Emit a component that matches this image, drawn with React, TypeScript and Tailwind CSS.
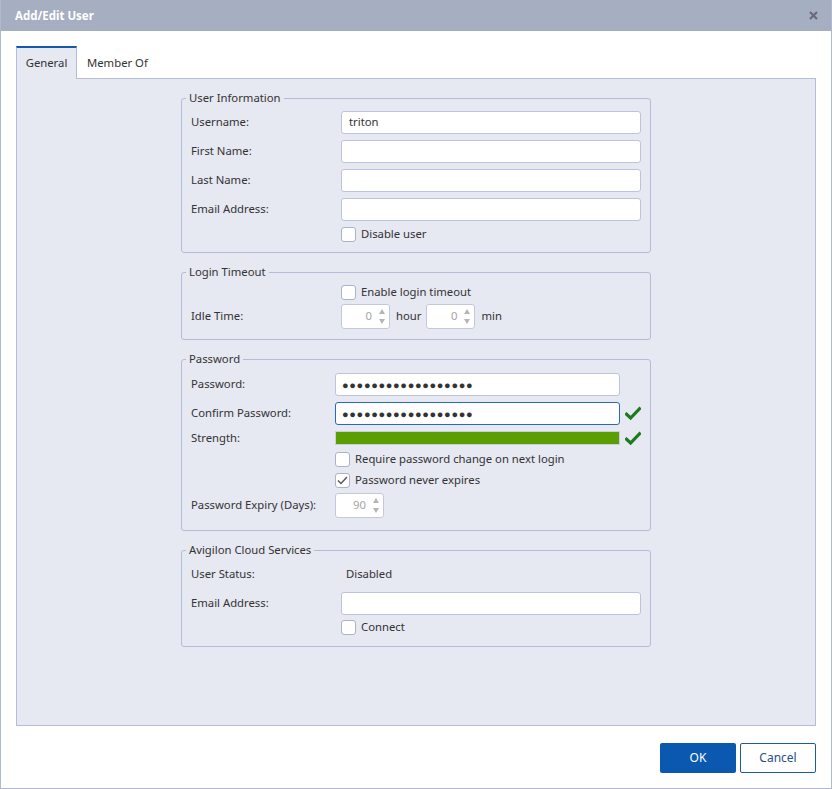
import React from 'react';

const FONT = { fontFamily: '"Noto Sans", "Open Sans", Arial, sans-serif' };

const GreenCheck = () => (
  <svg width="16" height="15" viewBox="0 0 16 15" className="shrink-0">
    <path d="M1.5 8.2 L5.6 12 L14.5 2.8" fill="none" stroke="#1e7a1e" strokeWidth="3.2" strokeLinecap="square" />
  </svg>
);

const CloseIcon = () => (
  <svg width="9" height="9" viewBox="0 0 9 9">
    <path d="M1 1 L8 8 M8 1 L1 8" stroke="#6a6a7c" strokeWidth="2.2" />
  </svg>
);

const Checkbox = ({ label, checked = false }: { label: string; checked?: boolean }) => (
  <label className="flex items-center gap-[5px] h-[15px]">
    <span className="w-[15px] h-[15px] shrink-0 bg-white border border-[#aab2cc] rounded-[3px] flex items-center justify-center">
      {checked && (
        <svg width="11" height="9" viewBox="0 0 11 9">
          <path d="M1 4.5 L4 7.5 L10 1" fill="none" stroke="#555" strokeWidth="1.4" />
        </svg>
      )}
    </span>
    <span>{label}</span>
  </label>
);

const TextBox = ({ value = '' }: { value?: string }) => (
  <div className="h-[23px] w-[300px] bg-white border border-[#bcc3dc] rounded-[3px] flex items-center px-[7px]">
    {value}
  </div>
);

const PasswordBox = ({ focused = false }: { focused?: boolean }) => (
  <div
    className={`h-[23px] w-[285px] bg-white border rounded-[3px] flex items-center px-[6px] ${
      focused ? 'border-[#2a68c0]' : 'border-[#bcc3dc]'
    }`}
  >
    <span className="text-[11px] tracking-[0.65px] text-[#333] leading-none">{'●'.repeat(18)}</span>
  </div>
);

const Spinner = ({ value }: { value: string }) => (
  <div className="h-[25px] w-[49px] shrink-0 bg-white border border-[#c3c9dd] rounded-[3px] flex items-center justify-end pr-[4px] gap-[7px]">
    <span className="text-[#a5a5a5]">{value}</span>
    <div className="flex flex-col gap-[5px]">
      <span className="w-0 h-0 border-l-[3.5px] border-r-[3.5px] border-b-[5px] border-l-transparent border-r-transparent border-b-[#b5b5b5]" />
      <span className="w-0 h-0 border-l-[3.5px] border-r-[3.5px] border-t-[5px] border-l-transparent border-r-transparent border-t-[#b5b5b5]" />
    </div>
  </div>
);

const Group = ({ title, children, className = '' }: { title: string; children: React.ReactNode; className?: string }) => (
  <fieldset className={`w-[470px] border border-[#b4bcd8] rounded-[3px] pl-[9px] pr-[9px] ${className}`}>
    <legend className="-ml-[5px] px-[3px] leading-[16px]">{title}</legend>
    {children}
  </fieldset>
);

const Row = ({
  label,
  labelW = 'w-[150px]',
  h = 'h-[23px]',
  children,
}: {
  label: string;
  labelW?: string;
  h?: string;
  children: React.ReactNode;
}) => (
  <div className={`flex items-center ${h}`}>
    <span className={`${labelW} shrink-0`}>{label}</span>
    {children}
  </div>
);

export default function App() {
  return (
    <div
      style={FONT}
      className="w-[832px] h-[789px] bg-white border-x border-b border-[#b0b8d2] flex flex-col text-[11.3px] text-[#333] overflow-hidden"
    >
      {/* title bar */}
      <div className="h-[31px] bg-[#a6aec1] flex items-center justify-between pl-[14px] pr-[13px] shrink-0">
        <span className="text-white font-bold text-[11.5px]">Add/Edit User</span>
        <CloseIcon />
      </div>

      <div className="pl-[15px] pr-[15px] pt-[15px] flex flex-col">
        {/* tabs */}
        <div className="flex h-[33px] -mb-px relative z-10">
          <div className="w-[61px] bg-[#e6e8f2] border-x border-[#b4bcd8] border-t-2 border-t-[#1658b0] flex items-center justify-center pb-[1px]">
            General
          </div>
          <div className="pl-[10px] flex items-center pt-[1px]">Member Of</div>
        </div>

        {/* panel */}
        <div className="h-[648px] bg-[#e6e8f2] border border-[#b4bcd8] flex flex-col items-center pt-[11px] gap-[11px]">
          <Group title="User Information" className="pb-[10px]">
            <div className="flex flex-col gap-[6px] pt-[5px]">
              <Row label="Username:">
                <TextBox value="triton" />
              </Row>
              <Row label="First Name:">
                <TextBox />
              </Row>
              <Row label="Last Name:">
                <TextBox />
              </Row>
              <Row label="Email Address:">
                <TextBox />
              </Row>
              <div className="pl-[150px]">
                <Checkbox label="Disable user" />
              </div>
            </div>
          </Group>

          <Group title="Login Timeout" className="pb-[10px]">
            <div className="flex flex-col gap-[4px] pt-[5px]">
              <div className="pl-[150px]">
                <Checkbox label="Enable login timeout" />
              </div>
              <Row label="Idle Time:" h="h-[25px]">
                <Spinner value="0" />
                <span className="ml-[6px] mr-[5px]">hour</span>
                <Spinner value="0" />
                <span className="ml-[6px]">min</span>
              </Row>
            </div>
          </Group>

          <Group title="Password" className="pb-[12px]">
            <div className="flex flex-col pt-[6px]">
              <Row label="Password:" labelW="w-[144px]">
                <PasswordBox />
              </Row>
              <div className="mt-[6px]">
                <Row label="Confirm Password:" labelW="w-[144px]">
                  <PasswordBox focused />
                  <span className="ml-[5px]">
                    <GreenCheck />
                  </span>
                </Row>
              </div>
              <div className="mt-[6px]">
                <Row label="Strength:" labelW="w-[144px]" h="h-[14px]">
                  <div className="w-[285px] h-[14px] bg-[#5a9e02] border border-[#c8cede]" />
                  <span className="ml-[5px]">
                    <GreenCheck />
                  </span>
                </Row>
              </div>
              <div className="pl-[144px] mt-[7px] flex flex-col gap-[6px]">
                <Checkbox label="Require password change on next login" />
                <Checkbox label="Password never expires" checked />
              </div>
              <div className="mt-[5px]">
                <Row label="Password Expiry (Days):" labelW="w-[144px]" h="h-[25px]">
                  <Spinner value="90" />
                </Row>
              </div>
            </div>
          </Group>

          <Group title="Avigilon Cloud Services" className="pb-[11px]">
            <div className="flex flex-col pt-[5px]">
              <div className="flex items-center h-[23px]">
                <span className="w-[155px] shrink-0">User Status:</span>
                <span>Disabled</span>
              </div>
              <div className="mt-[6px]">
                <Row label="Email Address:">
                  <TextBox />
                </Row>
              </div>
              <div className="pl-[150px] mt-[5px]">
                <Checkbox label="Connect" />
              </div>
            </div>
          </Group>
        </div>

        {/* buttons */}
        <div className="flex justify-end gap-[4px] mt-[17px]">
          <button className="w-[76px] h-[30px] bg-[#0a58b0] text-white rounded-[2px] text-[12px]">OK</button>
          <button className="w-[76px] h-[30px] bg-white border border-[#1d5aa8] text-[#2a4f86] rounded-[2px] text-[12px]">
            Cancel
          </button>
        </div>
      </div>
    </div>
  );
}
